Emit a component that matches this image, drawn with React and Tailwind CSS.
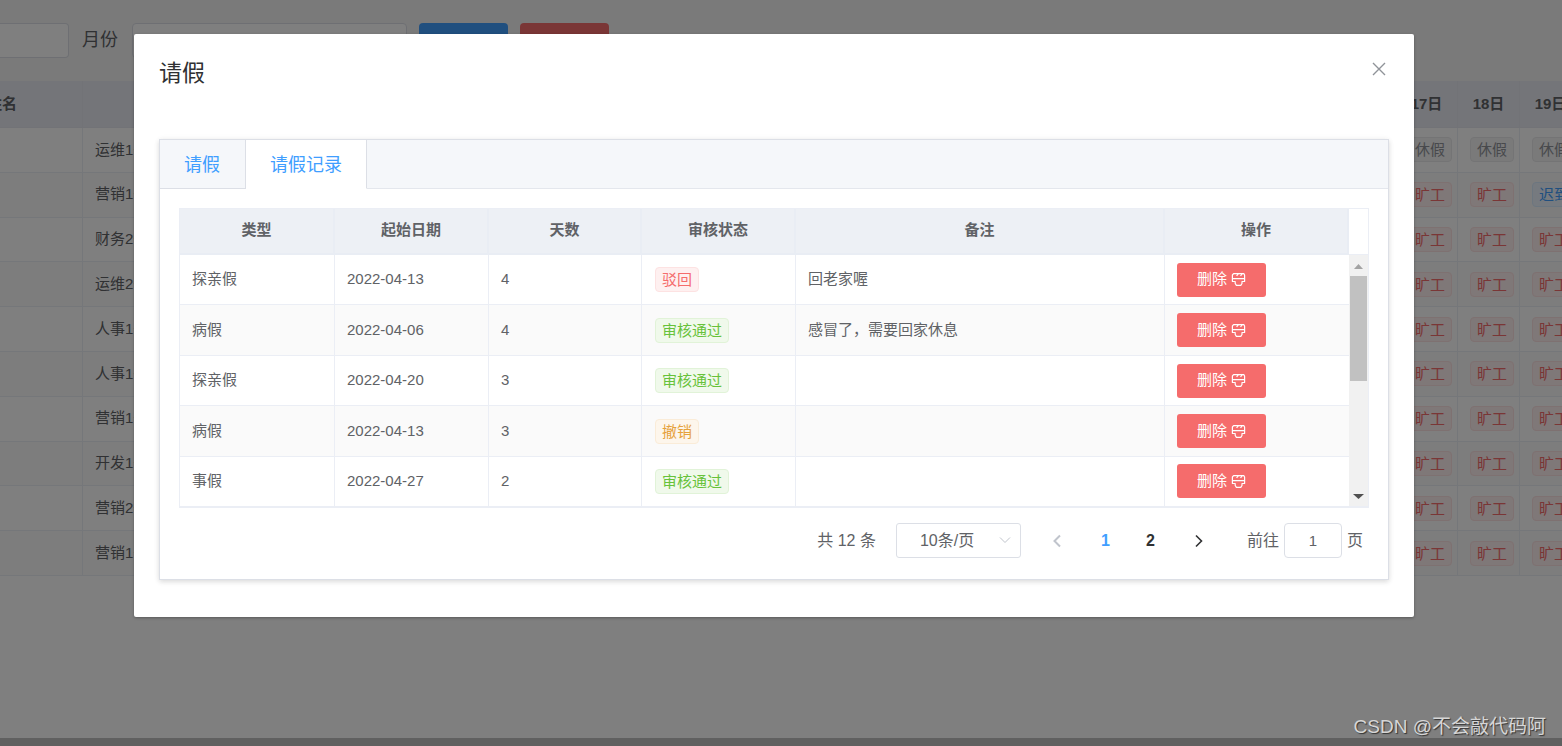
import React, { useState } from "react";

const people = [
  { group: "运维1号", days: ["休假", "休假", "休假"] },
  { group: "营销1号", days: ["旷工", "旷工", "迟到"] },
  { group: "财务2号", days: ["旷工", "旷工", "旷工"] },
  { group: "运维2号", days: ["旷工", "旷工", "旷工"] },
  { group: "人事1号", days: ["旷工", "旷工", "旷工"] },
  { group: "人事1号", days: ["旷工", "旷工", "旷工"] },
  { group: "营销1号", days: ["旷工", "旷工", "旷工"] },
  { group: "开发1号", days: ["旷工", "旷工", "旷工"] },
  { group: "营销2号", days: ["旷工", "旷工", "旷工"] },
  { group: "营销1号", days: ["旷工", "旷工", "旷工"] },
];

const records = [
  { type: "探亲假", date: "2022-04-13", days: 4, status: "驳回", note: "回老家喔" },
  { type: "病假", date: "2022-04-06", days: 4, status: "审核通过", note: "感冒了，需要回家休息" },
  { type: "探亲假", date: "2022-04-20", days: 3, status: "审核通过", note: "" },
  { type: "病假", date: "2022-04-13", days: 3, status: "撤销", note: "" },
  { type: "事假", date: "2022-04-27", days: 2, status: "审核通过", note: "" },
];

const tagColors = {
  休假: "border-[#e9e9eb] bg-[#f4f4f5] text-[#909399]",
  旷工: "border-[#fde2e2] bg-[#fef0f0] text-[#f56c6c]",
  迟到: "border-[#d9ecff] bg-[#ecf5ff] text-[#409eff]",
  驳回: "border-[#fde2e2] bg-[#fef0f0] text-[#f56c6c]",
  审核通过: "border-[#e1f3d8] bg-[#f0f9eb] text-[#67c23a]",
  撤销: "border-[#faecd8] bg-[#fdf6ec] text-[#e6a23c]",
};

function Tag({ children }) {
  return (
    <span
      className={`inline-flex h-[25px] items-center rounded border px-1.5 align-middle text-[15px] leading-none whitespace-nowrap ${tagColors[children]}`}
    >
      {children}
    </span>
  );
}

function DeleteIcon() {
  return (
    <svg viewBox="0 0 15 15" className="size-[15px]" fill="none" stroke="currentColor" strokeWidth="1.2" aria-hidden="true">
      <path d="M2.600 1.600h10.200l.8 1.400v6.500h-2.600v2l-1.200 1.900H5.400L4.200 11.500v-2H1.400V3z" strokeLinejoin="round" />
      <path d="M1.400 6.600h12.200M5.600 3.900l1.600-2M9.500 3.900l1.600-2" />
    </svg>
  );
}

function Chevron({ d, className }) {
  return (
    <svg viewBox="0 0 16 16" className={className} fill="none" stroke="currentColor" aria-hidden="true">
      <path d={d} />
    </svg>
  );
}

function AttendancePage() {
  return (
    <main className="min-h-screen overflow-hidden bg-white" inert>
      <form className="flex h-[81px] items-start gap-3 bg-[#f5f5f5] pt-[23px]">
        <input aria-label="姓名" className="h-[35px] w-[69px] rounded-r border border-l-0 border-[#dcdfe6] bg-white px-3" />
        <label htmlFor="month" className="w-[39px] pl-px text-[18px] leading-[34px] whitespace-nowrap text-[#606266]">
          月份
        </label>
        <input id="month" className="h-[35px] w-[275px] rounded border border-[#dcdfe6] bg-white px-3" />
        <button type="button" aria-label="查询" className="h-[35px] w-[89px] rounded bg-[#409eff]" />
        <button type="button" aria-label="重置" className="h-[35px] w-[89px] rounded bg-[#f56c6c]" />
      </form>
      <table className="-ml-[78px] h-[495px] w-[calc(100%+98px)] table-fixed border-separate border-spacing-0 text-[15px] text-[#606266]">
        <colgroup>
          <col className="w-[161px]" />
          <col />
          <col className="w-[62px]" />
          <col className="w-[62px]" />
          <col className="w-[62px]" />
        </colgroup>
        <thead>
          <tr className="h-[47px] bg-[#e8ebf2]">
            {["姓名", "", "17日", "18日", "19日"].map((name, i) => (
              <th key={i} className="border-r border-b border-[#e4e7ee] p-0 font-bold text-[#606266]">
                {name}
              </th>
            ))}
          </tr>
        </thead>
        <tbody>
          {people.map((person, i) => (
            <tr key={i} className="even:bg-[#fafafa]">
              <td className="border-r border-b border-[#ebeef5]" />
              <td className="border-r border-b border-[#ebeef5] px-3 py-0">{person.group}</td>
              {person.days.map((day, d) => (
                <td key={d} className="border-r border-b border-[#ebeef5] py-0 pr-0 pl-3">
                  <Tag>{day}</Tag>
                </td>
              ))}
            </tr>
          ))}
        </tbody>
      </table>
    </main>
  );
}

function RecordsTable() {
  return (
    <div className="flex border-t border-l border-b-2 border-[#ebeef5]">
      <table className="h-[297px] min-w-0 flex-1 table-fixed border-separate border-spacing-0 text-[15px] text-[#606266]">
        <colgroup>
          <col className="w-[155px]" />
          <col className="w-[154px]" />
          <col className="w-[153px]" />
          <col className="w-[154px]" />
          <col />
          <col className="w-[184px]" />
        </colgroup>
        <thead>
          <tr className="h-[46px] bg-[#edf0f5]">
            {["类型", "起始日期", "天数", "审核状态", "备注", "操作"].map((name) => (
              <th key={name} className="border-r-2 border-b-2 border-[#e9edf4] p-0 pb-0.5 font-bold">
                {name}
              </th>
            ))}
          </tr>
        </thead>
        <tbody>
          {records.map((record, i) => (
            <tr key={i} className="group even:bg-[#fafafa]">
              <td className="border-r border-b border-[#ebeef5] px-3 py-0 group-last:border-b-0">{record.type}</td>
              <td className="border-r border-b border-[#ebeef5] px-3 py-0 group-last:border-b-0">{record.date}</td>
              <td className="border-r border-b border-[#ebeef5] px-3 py-0 group-last:border-b-0">{record.days}</td>
              <td className="border-r border-b border-[#ebeef5] py-0 pr-3 pl-[13px] group-last:border-b-0">
                <Tag>{record.status}</Tag>
              </td>
              <td className="border-r border-b border-[#ebeef5] px-3 py-0 group-last:border-b-0">{record.note}</td>
              <td className="border-b border-[#ebeef5] px-3 py-0 group-last:border-b-0">
                <button
                  type="button"
                  className="flex h-[34px] w-[89px] items-center justify-center gap-1 rounded-[3px] bg-[#f56c6c] text-white"
                >
                  <span>删除</span>
                  <DeleteIcon />
                </button>
              </td>
            </tr>
          ))}
        </tbody>
      </table>
      <div className="flex w-5 flex-col border-r border-[#ebeef5]">
        <div className="h-[46px] border-b border-[#ebeef5]" />
        <div className="flex flex-1 flex-col items-center bg-[#f1f1f1]">
          <svg viewBox="0 0 17 21" className="h-[21px] w-[17px]" aria-hidden="true">
            <path d="M4 14h9L8.500 9z" fill="#a3a3a3" />
          </svg>
          <div className="h-[105px] w-[17px] bg-[#c1c1c1]" />
          <svg viewBox="0 0 17 21" className="mt-auto h-[21px] w-[17px]" aria-hidden="true">
            <path d="M3 9h11l-5.500 5z" fill="#505050" />
          </svg>
        </div>
      </div>
    </div>
  );
}

function Pagination() {
  return (
    <nav aria-label="分页" className="mt-[15px] flex h-[35px] items-center justify-end pr-1.5 text-[16px] text-[#606266]">
      <span>共 12 条</span>
      <span className="relative ml-5">
        <select
          aria-label="每页条数"
          className="block h-[35px] w-[125px] appearance-none rounded-[3px] border border-[#dcdfe6] bg-white pr-6 pl-[23px] text-[16px]"
        >
          <option>10条/页</option>
        </select>
        <Chevron d="M3 5.500l5 5 5-5" className="pointer-events-none absolute top-[9px] right-2 size-4 text-[#c0c4cc]" />
      </span>
      <button type="button" aria-label="上一页" disabled className="ml-[14px] flex w-11 justify-center text-[#c0c4cc]">
        <Chevron d="M11 2.500L5.500 8l5.500 5.500" className="size-4 stroke-2" />
      </button>
      <button type="button" aria-current="page" className="ml-1 w-[45px] font-bold text-[#409eff]">
        1
      </button>
      <button type="button" className="w-[45px] font-bold text-[#303133]">
        2
      </button>
      <button type="button" aria-label="下一页" className="ml-1 flex w-11 justify-center text-[#303133]">
        <Chevron d="M5 2.500L10.500 8 5 13.500" className="size-4 stroke-[1.6]" />
      </button>
      <label className="ml-[26px] flex items-center gap-[5px]">
        前往
        <input
          defaultValue="1"
          className="h-[35px] w-[58px] rounded border border-[#dcdfe6] bg-white text-center text-[15px]"
        />
        页
      </label>
    </nav>
  );
}

function LeaveDialog() {
  const [tab, setTab] = useState("请假记录");
  return (
    <section
      role="dialog"
      aria-modal="true"
      aria-labelledby="dialog-title"
      className="w-full max-w-[1280px] rounded-[2px] bg-white px-[25px] pt-6 pb-[37px] shadow-[0_1px_3px_rgba(0,0,0,0.3)]"
    >
      <header className="flex h-[81px] items-start justify-between">
        <h1 id="dialog-title" className="text-[23px] leading-[30px] text-[#303133]">
          请假
        </h1>
        <button type="button" aria-label="关闭" className="mt-[3px] mr-0.5 text-[#909399]">
          <Chevron d="M2 2l12 12M14 2L2 14" className="size-4 stroke-[1.4]" />
        </button>
      </header>
      <div className="border border-[#dcdfe6] bg-white shadow-[0_2px_5px_rgba(0,0,0,0.12),0_0_7px_rgba(0,0,0,0.04)]">
        <div role="tablist" className="flex h-[49px] border-b border-[#e4e7ed] bg-[#f5f7fa] text-[18px] text-[#409eff]">
          {["请假", "请假记录"].map((name) => (
            <button
              key={name}
              type="button"
              role="tab"
              aria-selected={tab === name}
              onClick={() => setTab(name)}
              className="h-[49px] border-r border-b border-[#dcdfe6] px-6 pt-0.5 first:pr-[25px] aria-selected:border-b-white aria-selected:bg-white"
            >
              {name}
            </button>
          ))}
        </div>
        <div className="px-[19px] pt-[19px] pb-[21px]">
          <RecordsTable />
          <Pagination />
        </div>
      </div>
    </section>
  );
}

export default function App() {
  return (
    <div className="relative font-['Liberation_Sans','Noto_Sans_CJK_SC',sans-serif]">
      <AttendancePage />
      <div className="absolute inset-0 flex items-start justify-center bg-black/50 pt-[34px] pr-[14px]">
        <LeaveDialog />
      </div>
      <div className="absolute inset-x-0 bottom-0 h-2 bg-[#606060]" />
      <p className="absolute right-4 bottom-1 text-[19px] leading-[30px] text-[#d6d6d6] [text-shadow:1px_1px_1px_#333]">
        CSDN @不会敲代码阿
      </p>
    </div>
  );
}
